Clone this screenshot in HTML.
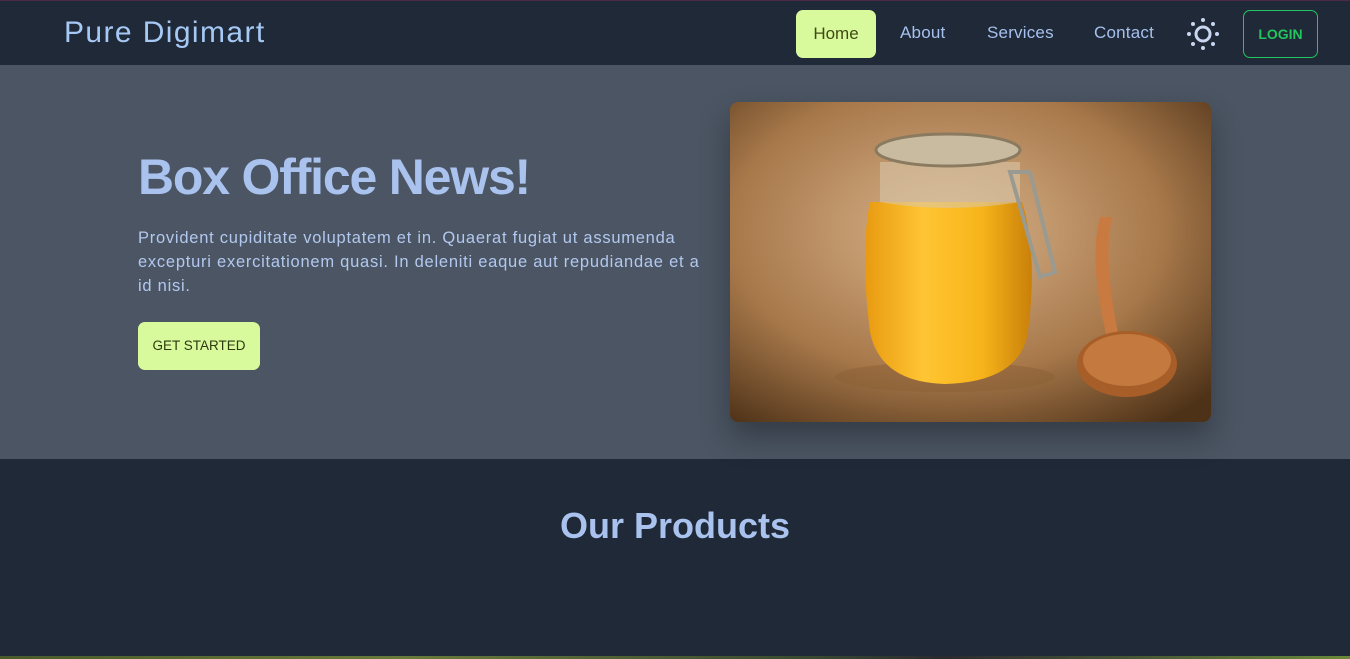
<!DOCTYPE html>
<html><head><style>
*{margin:0;padding:0;box-sizing:border-box}
body{width:1350px;height:659px;overflow:hidden;background:#1f2937;font-family:"Liberation Sans",sans-serif;color:#a6bff0}
.nav{position:absolute;top:0;left:0;width:1350px;height:65px;background:#1f2937;border-top:1px solid #4a2a44}
.logo{position:absolute;left:64px;top:15px;font-size:30px;color:#a6c8f5;letter-spacing:1.4px}
.nl{position:absolute;top:22px;font-size:17px;color:#a6c0ee;letter-spacing:.2px}
.home{position:absolute;left:796px;top:9px;width:80px;height:48px;background:#d9f99d;border-radius:7px;color:#3f4a14;font-size:17px;text-align:center;line-height:48px}
.login{position:absolute;left:1243px;top:9px;width:75px;height:48px;border:1px solid #22c55e;border-radius:7px;color:#22c55e;font-size:14px;font-weight:bold;text-align:center;line-height:46px}
.hero{position:absolute;top:65px;left:0;width:1350px;height:394px;background:#4b5563}
h1{position:absolute;left:138px;top:83px;font-size:50px;font-weight:bold;color:#aac3ee;letter-spacing:-1.2px}
p{position:absolute;left:138px;top:161px;width:600px;font-size:16.5px;line-height:24px;color:#b3c8ef;letter-spacing:.75px;white-space:nowrap}
.btn{position:absolute;left:138px;top:257px;width:122px;height:48px;background:#d9f99d;border-radius:7px;color:#2d3a10;font-size:13.5px;text-align:center;line-height:48px}
.img{position:absolute;left:730px;top:37px;width:481px;height:320px;border-radius:8px;overflow:hidden;box-shadow:0 15px 30px rgba(0,0,0,.3)}
h2{position:absolute;top:505px;left:0;width:1350px;text-align:center;font-size:36px;font-weight:bold;color:#aac3ee}
.strip{position:absolute;top:656px;left:0;width:1350px;height:3px;background:linear-gradient(90deg,#4a5a2a,#6a7a3a 30%,#3a4a30 60%,#2a2a30 70%,#6a8a3a)}
</style></head><body>
<div class="nav">
<div class="logo">Pure Digimart</div>
<div class="home">Home</div>
<div class="nl" style="left:900px">About</div>
<div class="nl" style="left:987px">Services</div>
<div class="nl" style="left:1094px">Contact</div>
<svg style="position:absolute;left:1185px;top:15px" width="36" height="36" viewBox="0 0 36 36" fill="#c8d6f0"><circle cx="18" cy="18" r="7" fill="none" stroke="#c8d6f0" stroke-width="3"/><circle cx="18" cy="4" r="2"/><circle cx="18" cy="32" r="2"/><circle cx="4" cy="18" r="2"/><circle cx="32" cy="18" r="2"/><circle cx="8" cy="8" r="2"/><circle cx="28" cy="8" r="2"/><circle cx="8" cy="28" r="2"/><circle cx="28" cy="28" r="2"/></svg>
<div class="login">LOGIN</div>
</div>
<div class="hero">
<h1>Box Office News!</h1>
<p>Provident cupiditate voluptatem et in. Quaerat fugiat ut assumenda<br>excepturi exercitationem quasi. In deleniti eaque aut repudiandae et a<br>id nisi.</p>
<div class="btn">GET STARTED</div>
<div class="img">
<svg width="481" height="320" viewBox="0 0 481 320">
<defs>
<radialGradient id="bg" cx="45%" cy="40%" r="75%"><stop offset="0" stop-color="#d9b48c"/><stop offset=".6" stop-color="#a7784a"/><stop offset="1" stop-color="#4e3218"/></radialGradient>
<linearGradient id="jar" x1="0" x2="1"><stop offset="0" stop-color="#e89a10"/><stop offset=".35" stop-color="#ffc533"/><stop offset=".7" stop-color="#f7b41a"/><stop offset="1" stop-color="#c9800a"/></linearGradient>
</defs>
<rect width="481" height="320" fill="url(#bg)"/>
<ellipse cx="215" cy="275" rx="110" ry="15" fill="#8a6034" opacity=".5"/>
<path d="M140 100 Q130 150 140 230 Q150 280 215 282 Q290 280 298 230 Q308 150 292 100 Z" fill="url(#jar)"/>
<path d="M150 60 L150 100 Q215 112 290 100 L290 60 Z" fill="#d9c7a8" opacity=".6"/>
<ellipse cx="218" cy="48" rx="72" ry="16" fill="#c9bba0" stroke="#8a7a60" stroke-width="3"/>
<path d="M280 70 L300 70 L325 170 L310 175 Z" fill="none" stroke="#9a9a90" stroke-width="4"/>
<path d="M370 115 Q358 160 378 240 L390 240 Q372 160 382 115 Z" fill="#c97a40"/>
<ellipse cx="397" cy="262" rx="50" ry="33" fill="#a85e28"/>
<ellipse cx="397" cy="258" rx="44" ry="26" fill="#c47a3e"/>
</svg>
</div>
</div>
<h2>Our Products</h2>
<div class="strip"></div>
</body></html>
